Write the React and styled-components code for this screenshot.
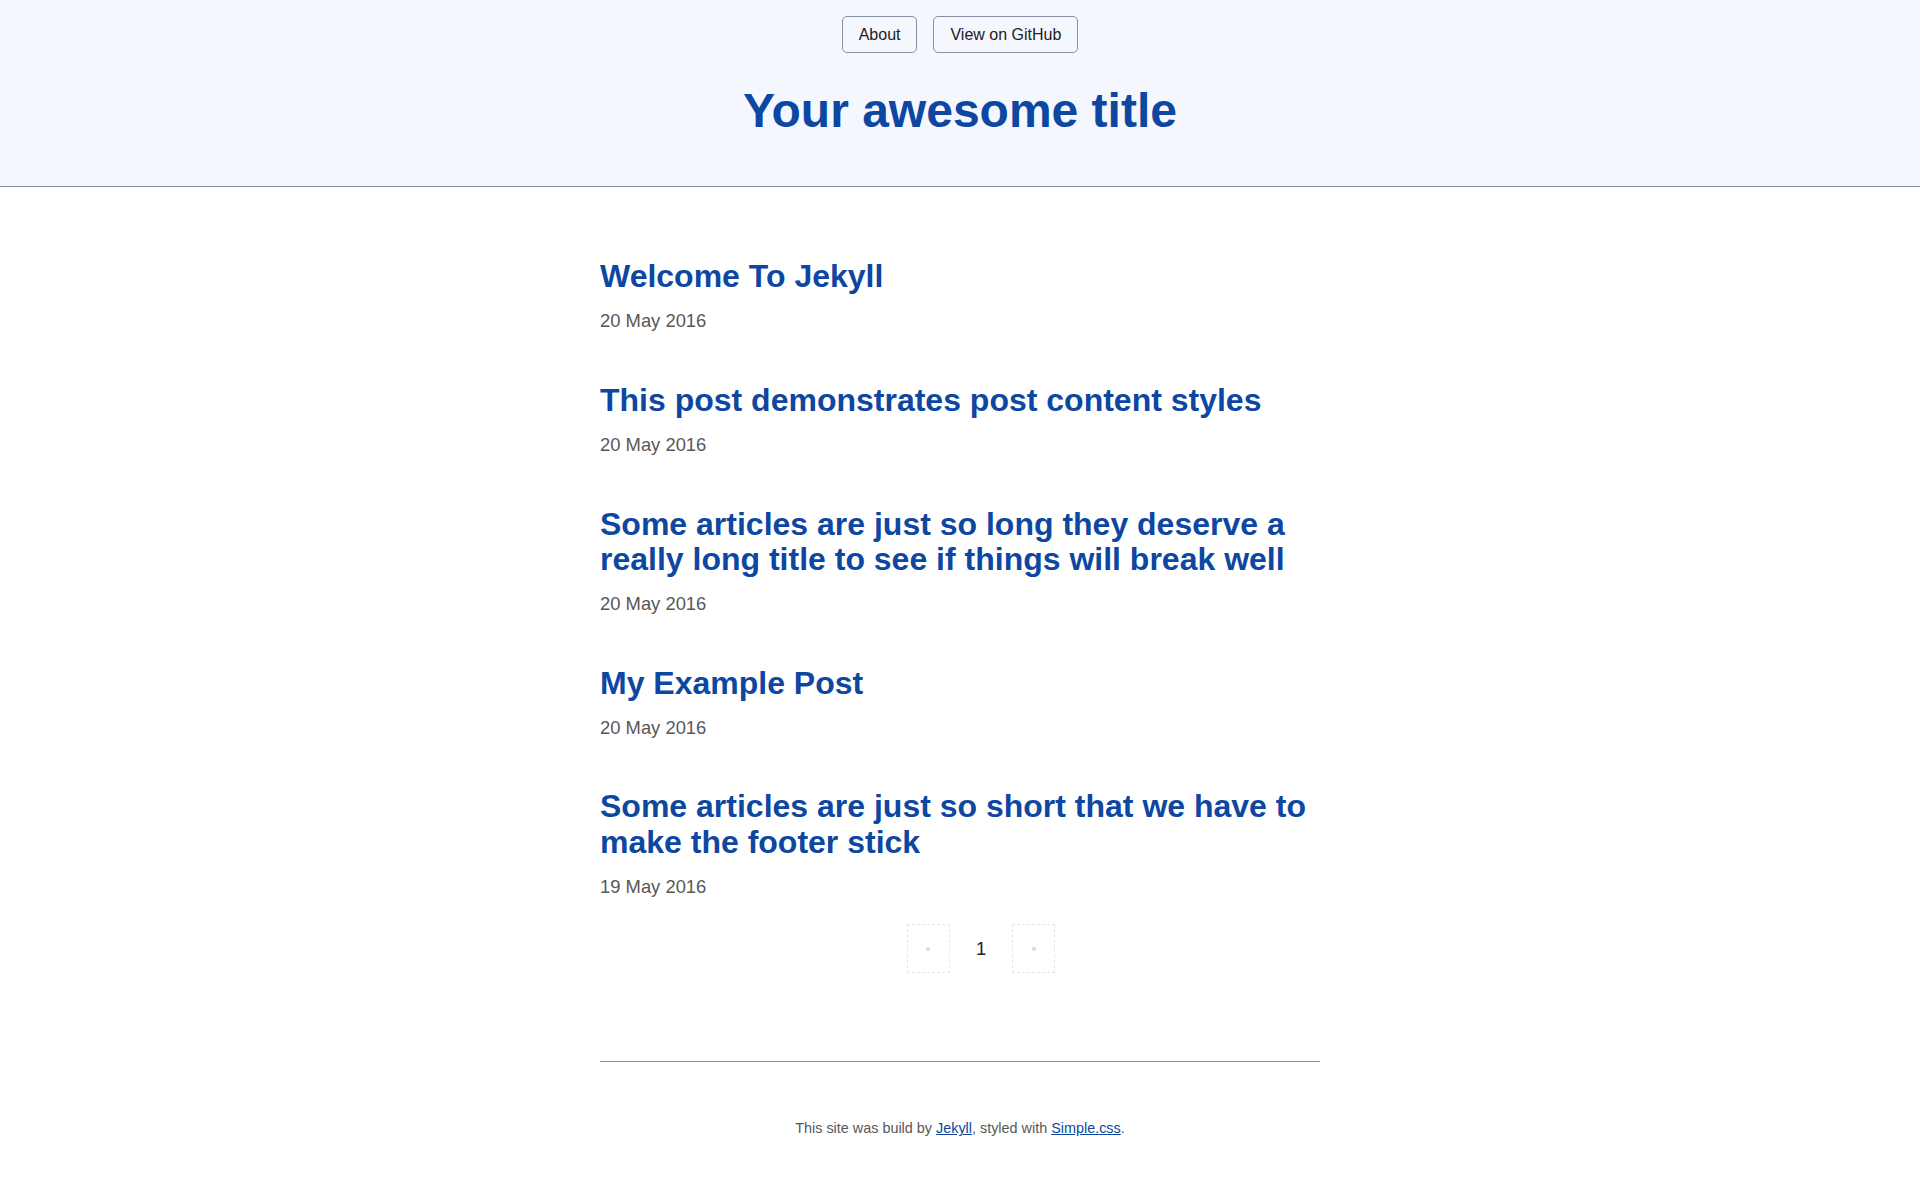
import React from "react"
import styled, { createGlobalStyle } from "styled-components"

const GlobalStyle = createGlobalStyle`
  html, body {
    margin: 0;
    padding: 0;
  }
  body {
    font-family: "Liberation Sans", Arial, Helvetica, sans-serif;
    font-size: 18.4px;
    line-height: 1.5;
    color: #212121;
    background: #ffffff;
  }
`

const Header = styled.header`
  background: #f5f7ff;
  border-bottom: 1px solid #898ea4;
  padding: 16px 8px 48px;
  text-align: center;
`

const Nav = styled.nav`
  display: flex;
  justify-content: center;
  gap: 16px;
  font-size: 16px;
  line-height: 2;
`

const NavLink = styled.a`
  display: inline-block;
  border: 1px solid #898ea4;
  border-radius: 5px;
  color: #212121;
  padding: 1.6px 16px;
  text-decoration: none;
  cursor: pointer;
`

const SiteTitle = styled.h1`
  font-size: 48px;
  line-height: 1.1;
  font-weight: bold;
  color: #0d47a1;
  margin: 32px 0 0;
`

const Main = styled.main`
  width: 720px;
  margin: 0 auto;
  padding-top: 72px;
`

const PostList = styled.div`
  display: flex;
  flex-direction: column;
  gap: 48px;
`

const PostTitle = styled.h3`
  font-size: 32px;
  line-height: 1.1;
  font-weight: bold;
  margin: 0;

  a {
    color: #0d47a1;
    text-decoration: none;
  }
`

const PostDate = styled.p`
  margin: 13px 0 0;
  color: #585858;
`

const Pager = styled.ul`
  list-style: none;
  margin: 24px 0 0;
  padding: 0 0 0 42px;
  display: flex;
  justify-content: center;
  align-items: center;
  height: 49px;
`

const PagerBox = styled.li`
  width: 43px;
  height: 49px;
  box-sizing: border-box;
  border: 1px dashed #e2e6f0;
  display: flex;
  align-items: center;
  justify-content: center;

  &::after {
    content: "";
    width: 4px;
    height: 4px;
    border-radius: 1px;
    background: #dbe1ec;
  }
`

const PagerNumber = styled.li`
  color: #212121;
  padding: 0 26px;
`

const Rule = styled.hr`
  margin: 88px 0 0;
  border: none;
  border-top: 1px solid #898ea4;
`

const Footer = styled.footer`
  text-align: center;
  font-size: 14.4px;
  color: #585858;
  padding: 56px 16px 46px;

  a {
    color: #0d47a1;
  }
`

const posts = [
  { title: "Welcome To Jekyll", date: "20 May 2016" },
  { title: "This post demonstrates post content styles", date: "20 May 2016" },
  {
    title:
      "Some articles are just so long they deserve a really long title to see if things will break well",
    date: "20 May 2016",
  },
  { title: "My Example Post", date: "20 May 2016" },
  {
    title: "Some articles are just so short that we have to make the footer stick",
    date: "19 May 2016",
  },
]

const Post = ({ title, date }) => (
  <article>
    <PostTitle>
      <a href="#">{title}</a>
    </PostTitle>
    <PostDate>{date}</PostDate>
  </article>
)

export default function App() {
  return (
    <>
      <GlobalStyle />
      <Header>
        <Nav>
          <NavLink href="#">About</NavLink>
          <NavLink href="#">View on GitHub</NavLink>
        </Nav>
        <SiteTitle>Your awesome title</SiteTitle>
      </Header>
      <Main>
        <PostList>
          {posts.map(post => (
            <Post key={post.title} title={post.title} date={post.date} />
          ))}
        </PostList>
        <Pager>
          <PagerBox />
          <PagerNumber>1</PagerNumber>
          <PagerBox />
        </Pager>
        <Rule />
      </Main>
      <Footer>
        This site was build by <a href="#">Jekyll</a>, styled with{" "}
        <a href="#">Simple.css</a>.
      </Footer>
    </>
  )
}
